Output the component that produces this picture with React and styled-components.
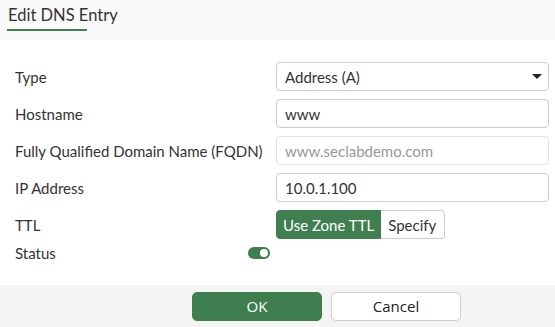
import styled, {createGlobalStyle} from 'styled-components';

const GREEN = '#3f7f4f';

const Global = createGlobalStyle`
  html, body {
    margin: 0;
    padding: 0;
    background: #fff;
  }
  body {
    font-family: Lato, "Open Sans", sans-serif;
    color: #333;
  }
`;

const Page = styled.div`
  width: 555px;
  height: 327px;
  display: flex;
  flex-direction: column;
  background: #fff;
  overflow: hidden;
`;

const Header = styled.div`
  height: 40px;
  background: #fafafa;
  padding: 0 7px;
  box-sizing: border-box;
`;

const Title = styled.div`
  font-size: 16.5px;
  line-height: 20px;
  padding: 5px 1px 0;
  color: #333;
`;

const Underline = styled.div`
  width: 80px;
  height: 2px;
  margin-top: 4px;
  background: ${GREEN};
`;

const Form = styled.div`
  flex: 1;
  padding: 22px 6px 0 15px;
  display: flex;
  flex-direction: column;
  gap: 8px;
`;

const Row = styled.div`
  display: grid;
  grid-template-columns: 261px 273px;
  align-items: center;
  min-height: 29px;
`;

const Label = styled.label`
  font-size: 15px;
  color: #333;
`;

const Field = styled.div`
  height: 29px;
  box-sizing: border-box;
  border: 1px solid ${(p) => (p.$disabled ? '#e2e2e2' : '#ccc')};
  border-radius: 4px;
  padding: 0 8px;
  display: flex;
  align-items: center;
  justify-content: space-between;
  font-size: 15px;
  color: ${(p) => (p.$disabled ? '#999' : '#333')};
  background: #fff;
`;

const Caret = styled.span`
  width: 0;
  height: 0;
  border-left: 5px solid transparent;
  border-right: 5px solid transparent;
  border-top: 5px solid #222;
  margin-right: -2px;
`;

const Toggle = styled.div`
  display: flex;
  height: 29px;
`;

const ToggleBtn = styled.button`
  font-family: Lato, sans-serif;
  font-size: 15px;
  height: 29px;
  padding: ${(p) => (p.$active ? '0 6px' : '0 8px 0 7px')};
  border: 1px solid ${(p) => (p.$active ? GREEN : '#ccc')};
  background: ${(p) => (p.$active ? GREEN : '#fff')};
  color: ${(p) => (p.$active ? '#fff' : '#333')};
  border-radius: ${(p) => (p.$first ? '4px 0 0 4px' : '0 4px 4px 0')};
  border-left-width: ${(p) => (p.$first ? 1 : 0)}px;
`;

const StatusRow = styled.div`
  display: flex;
  align-items: center;
  justify-content: space-between;
  width: 255px;
  margin-top: -3px;
`;

const Switch = styled.span`
  width: 22px;
  height: 12px;
  border-radius: 6px;
  background: ${GREEN};
  position: relative;
  &::after {
    content: '';
    position: absolute;
    right: 2px;
    top: 2px;
    width: 8px;
    height: 8px;
    border-radius: 50%;
    background: #fff;
  }
`;

const Footer = styled.div`
  height: 42px;
  background: #f4f4f4;
  display: flex;
  align-items: center;
  gap: 9px;
  padding-left: 192px;
`;

const Button = styled.button`
  width: 130px;
  height: 29px;
  border-radius: 5px;
  font-family: "Open Sans", "Liberation Sans", sans-serif;
  font-size: 15px;
  border: 1px solid ${(p) => (p.$primary ? GREEN : '#ccc')};
  background: ${(p) => (p.$primary ? GREEN : '#fff')};
  color: ${(p) => (p.$primary ? '#fff' : '#222')};
`;

export default function App() {
  return (
    <Page>
      <Global />
      <Header>
        <Title>Edit DNS Entry</Title>
        <Underline />
      </Header>
      <Form>
        <Row>
          <Label>Type</Label>
          <Field>
            Address (A)
            <Caret />
          </Field>
        </Row>
        <Row>
          <Label>Hostname</Label>
          <Field>www</Field>
        </Row>
        <Row>
          <Label>Fully Qualified Domain Name (FQDN)</Label>
          <Field $disabled>www.seclabdemo.com</Field>
        </Row>
        <Row>
          <Label>IP Address</Label>
          <Field>10.0.1.100</Field>
        </Row>
        <Row>
          <Label>TTL</Label>
          <Toggle>
            <ToggleBtn $active $first>Use Zone TTL</ToggleBtn>
            <ToggleBtn>Specify</ToggleBtn>
          </Toggle>
        </Row>
        <StatusRow>
          <Label>Status</Label>
          <Switch />
        </StatusRow>
      </Form>
      <Footer>
        <Button $primary>OK</Button>
        <Button>Cancel</Button>
      </Footer>
    </Page>
  );
}
